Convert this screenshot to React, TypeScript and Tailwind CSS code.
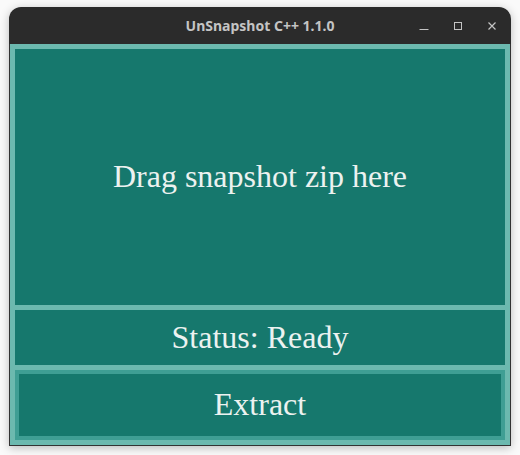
import React from "react";

export default function App() {
  return (
    <div className="w-[520px] h-[455px] bg-[#fafafa] relative overflow-hidden">
      <div className="absolute left-[9px] top-[7px] w-[502px] h-[439px] flex flex-col rounded-t-[12px] overflow-hidden shadow-[0_2px_10px_rgba(0,0,0,0.25)]">
        <div className="h-[37px] bg-[#2b2b2b] flex items-center justify-center relative shrink-0">
          <span
            className="text-[14px] font-bold text-[#c4c4c4] tracking-[0px]"
            style={{ fontFamily: '"Noto Sans", "Open Sans", sans-serif' }}
          >
            UnSnapshot C++ 1.1.0
          </span>
          <div className="absolute right-[2px] top-0 h-full flex items-center">
            <div className="w-[34px] flex justify-center">
              <svg width="10" height="10" viewBox="0 0 10 10">
                <line x1="0.5" y1="8.5" x2="9.5" y2="8.5" stroke="#c4c4c4" strokeWidth="1" />
              </svg>
            </div>
            <div className="w-[34px] flex justify-center">
              <svg width="10" height="10" viewBox="0 0 10 10">
                <rect x="1.5" y="1.5" width="7" height="7" fill="none" stroke="#c4c4c4" strokeWidth="1" />
              </svg>
            </div>
            <div className="w-[34px] flex justify-center">
              <svg width="10" height="10" viewBox="0 0 10 10">
                <path d="M1.5 1.5 L8.5 8.5 M8.5 1.5 L1.5 8.5" stroke="#c4c4c4" strokeWidth="1.2" />
              </svg>
            </div>
          </div>
        </div>
        <div
          className="flex-1 bg-[#6cb9af] border-x border-b border-[#333333] p-[5px] flex flex-col gap-[5px] text-[#ecf2f0]"
          style={{ fontFamily: '"Liberation Serif", "Times New Roman", serif' }}
        >
          <div className="h-[256px] bg-[#16786d] flex items-center justify-center text-[32px] leading-none pb-[2px]">
            Drag snapshot zip here
          </div>
          <div className="h-[55px] bg-[#16786d] flex items-center justify-center text-[32px] leading-none pb-[2px]">
            Status: Ready
          </div>
          <div className="h-[70px] bg-[#16786d] border-[4px] border-[#3f9e94] flex items-center justify-center text-[32px] leading-none pb-[2px]">
            Extract
          </div>
        </div>
      </div>
    </div>
  );
}
